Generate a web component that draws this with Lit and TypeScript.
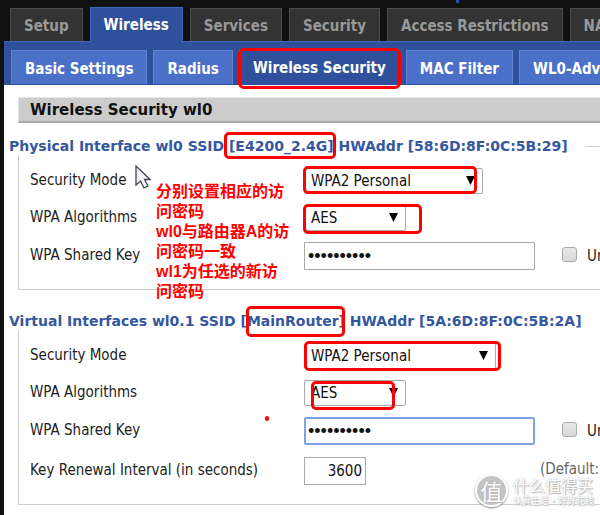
import { LitElement, html, css, nothing } from "lit";
import { customElement, property } from "lit/decorators.js";

@customElement("tab-bar")
class TabBar extends LitElement {
  @property({ attribute: false }) items: string[] = [];
  @property() active = "";
  @property({ type: Boolean, reflect: true }) sub = false;
  @property({ type: Boolean }) marked = false;

  static styles = css`
    :host { display: block; }
    nav { display: flex; align-items: flex-end; gap: 7px; height: 33px; padding-left: 6px; }
    a {
      box-sizing: border-box; flex: none; height: 33px; padding: 0 13px;
      font: bold 15px/34px "DejaVu Sans Condensed", "DejaVu Sans", sans-serif;
      color: #999; background: #333; border: 1px solid #4c4c4c; border-bottom: 0;
      text-decoration: none; white-space: nowrap; position: relative;
    }
    a.active {
      height: 36px; color: #fff; background: #2f519c; border-color: #3f66b8;
      margin-bottom: -2px; z-index: 1;
    }
    :host([sub]) nav { height: 34px; gap: 6px; padding-left: 7px; }
    :host([sub]) a { height: 34px; line-height: 36px; color: #fff; background: #4a70c8; border-color: #5f83d6; }
    :host([sub]) a.active { height: 35px; background: #2f519c; border-color: #3f66b8; margin-bottom: 0; }
    .mark {
      position: absolute; inset: -2px -2px -5px -2px; border: 3px solid #f00; border-radius: 6px;
    }
  `;

  render() {
    return html`<nav>
      ${this.items.map((t) => html`<a href="#" class=${t === this.active ? "active" : "idle"}>${t}${t === this.active && this.marked ? html`<span class="mark"></span>` : nothing}</a>`)}
    </nav>`;
  }
}

interface Row {
  id: string;
  label: string;
  kind: "select" | "password" | "number";
  value: string;
  size: string;
  mark?: string;
}

@customElement("security-group")
class SecurityGroup extends LitElement {
  @property({ attribute: false }) legend: string[] = [];
  @property({ attribute: false }) rows: Row[] = [];
  @property() focused = "";
  @property() ssidMark = "";

  static styles = css`
    :host { display: block; font: 15px/18px "DejaVu Sans Condensed", "DejaVu Sans", sans-serif; color: #222; }
    fieldset {
      margin: 0; min-width: 0; border: 1px solid #ccc; border-right: 0;
      padding: 7px 0 13px 11px;
    }
    legend {
      margin-left: -21px; padding: 0 18px 0 0; height: 18px; background: #fff;
      font-weight: bold; font-size: 14px; font-family: "DejaVu Sans", sans-serif; color: #3457a0; white-space: nowrap;
    }
    .ssid { position: relative; }
    .row { display: flex; align-items: center; height: 37px; white-space: nowrap; }
    .row.tall { height: 40px; }
    .label { flex: none; width: 274px; padding-bottom: 2px; }
    .field { position: relative; flex: none; display: flex; }
    select, input { box-sizing: border-box; margin: 0; font: inherit; color: #111; }
    select {
      appearance: none; height: 26px; padding: 0 6px; background: #fff;
      border: 1px solid #aaa; border-radius: 2px;
    }
    .wide { width: 179px; }
    .wider { width: 192px; }
    .short { width: 102px; }
    .arrow { position: absolute; right: 8px; top: 8px; width: 9px; height: 9px; pointer-events: none; }
    .text { height: 28px; border: 1px solid #aaa; padding: 0 3px; outline: 0; background: #fff; }
    .key { width: 231px; font: 18px "Liberation Sans", sans-serif; }
    .key.focused { border: 2px solid #7da2e8; padding: 0 2px; border-radius: 2px; }
    .num { width: 62px; text-align: right; }
    .unmask { display: flex; align-items: center; gap: 10px; margin-left: 27px; }
    .unmask input {
      appearance: none; width: 15px; height: 15px; margin-bottom: 4px;
      border: 1px solid #aaa; border-radius: 3px; background: linear-gradient(#e8e8e8, #d8d8d8);
    }
    .hint { margin-left: 174px; padding-bottom: 4px; color: #666; }
    .mark {
      position: absolute; box-sizing: border-box; border: 3px solid #f00; border-radius: 5px;
      pointer-events: none; inset: -2px;
    }
    .mark.first { inset: -6px -2px -5px -5px; }
    .mark.second { inset: -7px 0 -8px 5px; }
    .mark.tight { inset: -2px 6px 0 -1px; }
    .mark.loose { inset: -1px -16px -3px -1px; }
    .mark.over { inset: -2px -5px -2px 0; }
    .mark.inner { inset: 1px 11px -4px 7px; }
  `;

  private control(r: Row) {
    if (r.kind === "select") {
      return html`<div class="field">
        <select id=${r.id} class=${r.size}><option>${r.value}</option></select>
        <svg class="arrow" viewBox="0 0 9 9"><path d="M0 0h9L4.500 9z" fill="#000" /></svg>
        ${r.mark ? html`<span class="mark ${r.mark}"></span>` : nothing}
      </div>`;
    }
    if (r.kind === "password") {
      return html`<input id=${r.id} type="password" class="text key ${this.focused === r.id ? "focused" : ""}" .value=${r.value} />
        <label class="unmask"><input type="checkbox" />Unmask</label>`;
    }
    return html`<input id=${r.id} type="text" class="text num" .value=${r.value} />
      <span class="hint">(Default: 3600, Range: 1 - 99999)</span>`;
  }

  render() {
    const [before, ssid, after] = this.legend;
    return html`<fieldset>
      <legend>${before}<span class="ssid">${ssid}<span class="mark ${this.ssidMark}"></span></span>${after}</legend>
      ${this.rows.map((r) => html`<div class="row ${r.kind === "select" ? "" : "tall"}">
        <label class="label" for=${r.id}>${r.label}</label>${this.control(r)}
      </div>`)}
    </fieldset>`;
  }
}

@customElement("app-root")
class AppRoot extends LitElement {
  static styles = css`
    :host {
      display: flex; flex-direction: column; position: relative; overflow: hidden; box-sizing: border-box;
      min-height: 100vh; padding: 8px 0 0 4px; background: #111;
      font-family: "DejaVu Sans Condensed", "DejaVu Sans", sans-serif;
    }
    .band { height: 44px; background: #2f519c; border-top: 1px solid #3f66b8; padding-top: 8px; box-sizing: border-box; }
    main { flex: 1; background: #fff; padding: 12px 0 0 14px; }
    h2 {
      margin: 0; height: 26px; box-sizing: border-box; padding-left: 11px; background: #ccc;
      border-top: 1px solid #e4e4e4; border-bottom: 2px solid #aaa; border-left: 1px solid #e4e4e4;
      font: bold 15px/24px "DejaVu Sans", sans-serif; color: #111;
    }
    security-group { margin-top: 14px; }
    security-group + security-group { margin-top: 22px; }
    .note {
      position: absolute; left: 156px; top: 182px; width: 134px; margin: 0;
      font: bold 16px/20px "Liberation Sans", "Noto Sans CJK SC", sans-serif; color: #f00; white-space: pre;
    }
    .pointer { position: absolute; left: 135px; top: 165px; width: 16px; height: 25px; }
    .dot { position: absolute; left: 265px; top: 416px; width: 4px; height: 5px; border-radius: 2px; background: #f00; }
    .tick { position: absolute; left: 456px; top: 0; width: 3px; height: 3px; background: #2b4fc0; }
    .stamp {
      position: absolute; left: 475px; top: 474px; display: flex; align-items: center; gap: 5px;
      color: #fff; font-family: "Noto Sans CJK SC", sans-serif; white-space: nowrap;
      text-shadow: 0 0 2px #aaa, 1px 1px 1px #bbb;
    }
    .seal {
      box-sizing: border-box; width: 33px; height: 33px; border-radius: 50%; border: 2px solid #fff;
      background: #c4c4c4; box-shadow: 0 1px 2px #888; font-size: 22px; line-height: 28px; text-align: center;
    }
    .name { font-size: 16px; line-height: 20px; }
    .motto { font-size: 9px; line-height: 11px; }
  `;

  private first: Row[] = [
    { id: "mode", label: "Security Mode", kind: "select", value: "WPA2 Personal", size: "wide", mark: "tight" },
    { id: "algo", label: "WPA Algorithms", kind: "select", value: "AES", size: "short", mark: "loose" },
    { id: "key", label: "WPA Shared Key", kind: "password", value: "0123456789", size: "" },
  ];
  private second: Row[] = [
    { id: "mode", label: "Security Mode", kind: "select", value: "WPA2 Personal", size: "wider", mark: "over" },
    { id: "algo", label: "WPA Algorithms", kind: "select", value: "AES", size: "short", mark: "inner" },
    { id: "key", label: "WPA Shared Key", kind: "password", value: "0123456789", size: "" },
    { id: "renew", label: "Key Renewal Interval (in seconds)", kind: "number", value: "3600", size: "" },
  ];

  render() {
    return html`
      <tab-bar .items=${["Setup", "Wireless", "Services", "Security", "Access Restrictions", "NAS"]} active="Wireless"></tab-bar>
      <div class="band">
        <tab-bar sub marked .items=${["Basic Settings", "Radius", "Wireless Security", "MAC Filter", "WL0-Advanced"]} active="Wireless Security"></tab-bar>
      </div>
      <main>
        <h2>Wireless Security wl0</h2>
        <security-group ssidMark="first" .rows=${this.first}
          .legend=${["Physical Interface wl0 SSID ", "[E4200_2.4G]", " HWAddr [58:6D:8F:0C:5B:29]"]}></security-group>
        <security-group ssidMark="second" focused="key" .rows=${this.second}
          .legend=${["Virtual Interfaces wl0.1 SSID ", "[MainRouter]", " HWAddr [5A:6D:8F:0C:5B:2A]"]}></security-group>
      </main>
      <span class="tick"></span>
      <svg class="pointer" viewBox="0 0 16 25">
        <path d="M1 1v19l4.500-4 3.500 7 4-2-3.500-6.500H15z" fill="#f4f4f4" stroke="#445" stroke-width="1.300" />
      </svg>
      <p class="note">分别设置相应的访
问密码
wl0与路由器A的访
问密码一致
wl1为任选的新访
问密码</p>
      <span class="dot"></span>
      <div class="stamp">
        <div class="seal">值</div>
        <div><div class="name">什么值得买</div><div class="motto">认真生活·好好花钱</div></div>
      </div>
    `;
  }
}
